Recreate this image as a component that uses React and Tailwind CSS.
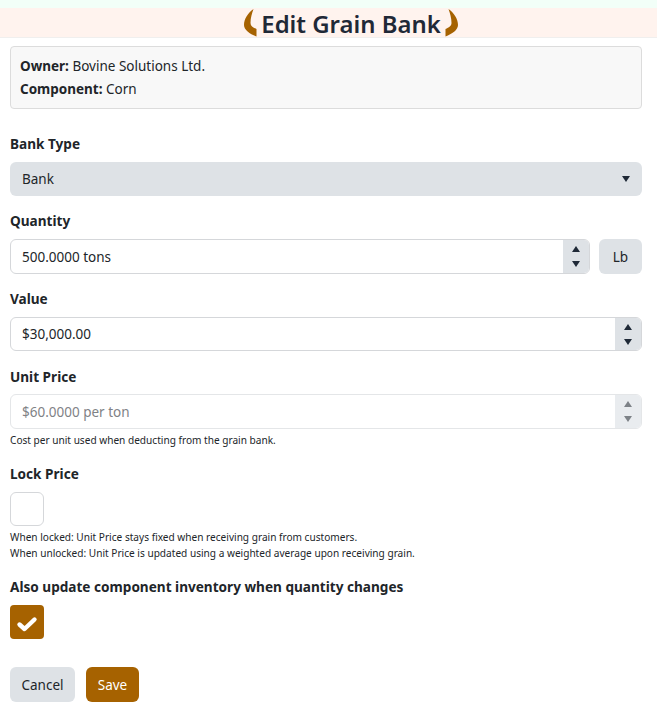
import React from "react";

// small up/down arrows of the number inputs
function Spinner({ disabled }) {
  const colorUp = disabled ? "border-b-[#7d8287]" : "border-b-[#1f2937]";
  const colorDown = disabled ? "border-t-[#7d8287]" : "border-t-[#1f2937]";
  return (
    <div className={`w-[26px] self-stretch flex flex-col items-center justify-center gap-[9px] ${disabled ? "bg-[#e9ecef]" : "bg-[#dee2e6]"}`}>
      <span className={`w-0 h-0 border-x-[4px] border-x-transparent border-b-[6px] ${colorUp}`} />
      <span className={`w-0 h-0 border-x-[4px] border-x-transparent border-t-[6px] ${colorDown}`} />
    </div>
  );
}

function Horn({ flip }) {
  return (
    <svg width="13" height="28" viewBox="0 0 13 28" className={flip ? "-scale-x-100" : ""}>
      <path d="M9.5 0 C4 4 0 10 0 16 C0 21 6 25 12.5 27.5 L12.5 20 C9 18.5 6.5 17 6.5 14 C6.5 9 8 4 9.5 0 Z" fill="#a66200" />
    </svg>
  );
}

function Label({ children, className = "" }) {
  return <div className={`h-[19px] font-bold text-[13.6px] leading-[17px] ${className}`}>{children}</div>;
}

function NumberField({ value, disabled, className = "", tall = true }) {
  return (
    <div className={`flex ${tall ? "h-[35px]" : "h-[34px]"} border ${disabled ? "border-[#e4e6e8]" : "border-[#d5d7da]"} rounded-md overflow-hidden bg-white ${className}`}>
      <div className={`flex-1 flex items-center pl-[11px] ${tall ? "pt-px" : ""} ${disabled ? "text-[#7f8286]" : "text-[#212529]"}`}>
        {value}
      </div>
      <Spinner disabled={disabled} />
    </div>
  );
}

export default function App() {
  return (
    <div className="w-[657px] h-[714px] overflow-hidden bg-white text-[#212529] text-[13.5px] font-['Noto_Sans','Open_Sans',sans-serif]">
      <div className="h-[8px] bg-[#f2fff8]" />
      <div className="h-[30px] pl-[45px] bg-[#fff3ee] border-b border-[#f0efee] flex items-center justify-center gap-[4px]">
        <Horn />
        <h1 className="mt-[3px] text-[23.9px] font-semibold leading-none text-[#1f2937]">Edit Grain Bank</h1>
        <Horn flip />
      </div>

      <div className="px-[10px] pr-[15px]">
        {/* Info */}
        <div className="mt-[8px] h-[63px] border border-[#dcdcdc] rounded bg-[#f8f8f8] px-[9px] flex flex-col justify-center gap-[4px] leading-[19px]">
          <div><b className="font-bold">Owner:</b> Bovine Solutions Ltd.</div>
          <div><b className="font-bold">Component:</b> Corn</div>
        </div>

        {/* Bank type */}
        <Label className="mt-[26px]">Bank Type</Label>
        <div className="mt-[8px] h-[34px] rounded-md bg-[#dee2e6] flex items-center justify-between pl-[12px] pr-[12px]">
          <span>Bank</span>
          <span className="w-0 h-0 border-x-[4px] border-x-transparent border-t-[6px] border-t-[#1f2937]" />
        </div>

        {/* Quantity */}
        <Label className="mt-[16px]">Quantity</Label>
        <div className="mt-[8px] flex gap-[9px]">
          <NumberField value="500.0000 tons" className="flex-1" />
          <div className="w-[43px] h-[35px] pt-px rounded-md bg-[#dee2e6] flex items-center justify-center">Lb</div>
        </div>

        {/* Value */}
        <Label className="mt-[16px]">Value</Label>
        <NumberField value="$30,000.00" tall={false} className="mt-[8px]" />

        {/* Unit price */}
        <Label className="mt-[17px]">Unit Price</Label>
        <NumberField value="$60.0000 per ton" disabled className="mt-[7px]" />
        <div className="mt-[3px] text-[10.1px] leading-[16px]">Cost per unit used when deducting from the grain bank.</div>

        {/* Lock price */}
        <Label className="mt-[17px]">Lock Price</Label>
        <div className="mt-[8px] w-[34px] h-[34px] border border-[#d5d7da] rounded-md bg-white" />
        <div className="mt-[3px] text-[10.1px] leading-[16px]">
          <div>When locked: Unit Price stays fixed when receiving grain from customers.</div>
          <div>When unlocked: Unit Price is updated using a weighted average upon receiving grain.</div>
        </div>

        {/* Also update */}
        <Label className="mt-[17px]">Also update component inventory when quantity changes</Label>
        <div className="mt-[8px] w-[34px] h-[34px] rounded bg-[#a66200] flex items-center justify-center">
          <svg width="22" height="18" viewBox="0 0 22 18" className="mt-[3px]">
            <path d="M3.5 9.5 L8.5 14 L18.5 4.5" fill="none" stroke="#fff" strokeWidth="4.4" strokeLinecap="round" strokeLinejoin="round" />
          </svg>
        </div>

        {/* Buttons */}
        <div className="mt-[28px] flex gap-[11px]">
          <button className="w-[65px] h-[35px] pt-px rounded-md bg-[#dee2e6] text-[#212529]">Cancel</button>
          <button className="w-[53px] h-[35px] pt-px rounded-md bg-[#a66200] text-white">Save</button>
        </div>
      </div>
    </div>
  );
}
